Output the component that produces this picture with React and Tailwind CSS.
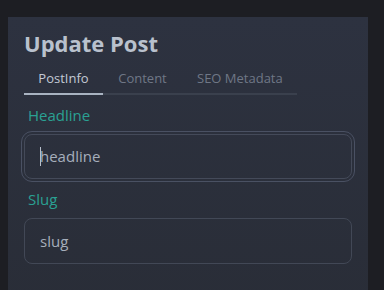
import React from 'react';

export default function App() {
  const tabs = ['PostInfo', 'Content', 'SEO Metadata'];

  return (
    <div className="w-[384px] h-[290px] overflow-hidden bg-[#1d1e23] pt-[17px] pl-[8px]" style={{ fontFamily: '"Open Sans", "Noto Sans", sans-serif' }}>
      <div className="w-[360px] h-[300px] bg-gradient-to-b from-[#2d3240] to-[#292d37] px-4 pt-[11px]">
        <h1 className="text-[22px] font-bold text-[#b9c1cd] leading-[30px]">Update Post</h1>

        <div className="mt-[11px] w-[273px] flex border-b-2 border-[#3a404d]">
          {tabs.map((tab, i) => (
            <div
              key={tab}
              className={'text-[13px] leading-[18px] pb-[6px] -mb-[2px] ' + (i === 0 ? 'w-[79px] text-center text-[#c3cad5] border-b-2 border-[#a9b3c1]' : i === 1 ? 'w-[79px] text-center text-[#6f7786]' : 'pl-[15px] text-[#6f7786]')}
            >
              {tab}
            </div>
          ))}
        </div>

        <label className="block mt-[9px] pl-[4px] text-[15px] leading-[22px] text-[#2aa193]">Headline</label>
        <div className="mt-[5px] -ml-[3px] w-[334px] rounded-[11px] border border-[#4a5163] p-[2px]">
          <div className="h-[45px] rounded-[8px] border border-[#444a59] flex items-center pl-[15px]">
            <span className="w-px h-[19px] bg-[#b8c0cc] -mr-px"></span>
            <span className="text-[15px] text-[#a6aebb]">headline</span>
          </div>
        </div>

        <label className="block mt-[6px] pl-[4px] text-[15px] leading-[22px] text-[#2aa193]">Slug</label>
        <div className="mt-[8px] w-[328px] h-[46px] rounded-[8px] border border-[#424856] flex items-center pl-[15px]">
          <span className="text-[15px] text-[#a6aebb]">slug</span>
        </div>
      </div>
    </div>
  );
}
